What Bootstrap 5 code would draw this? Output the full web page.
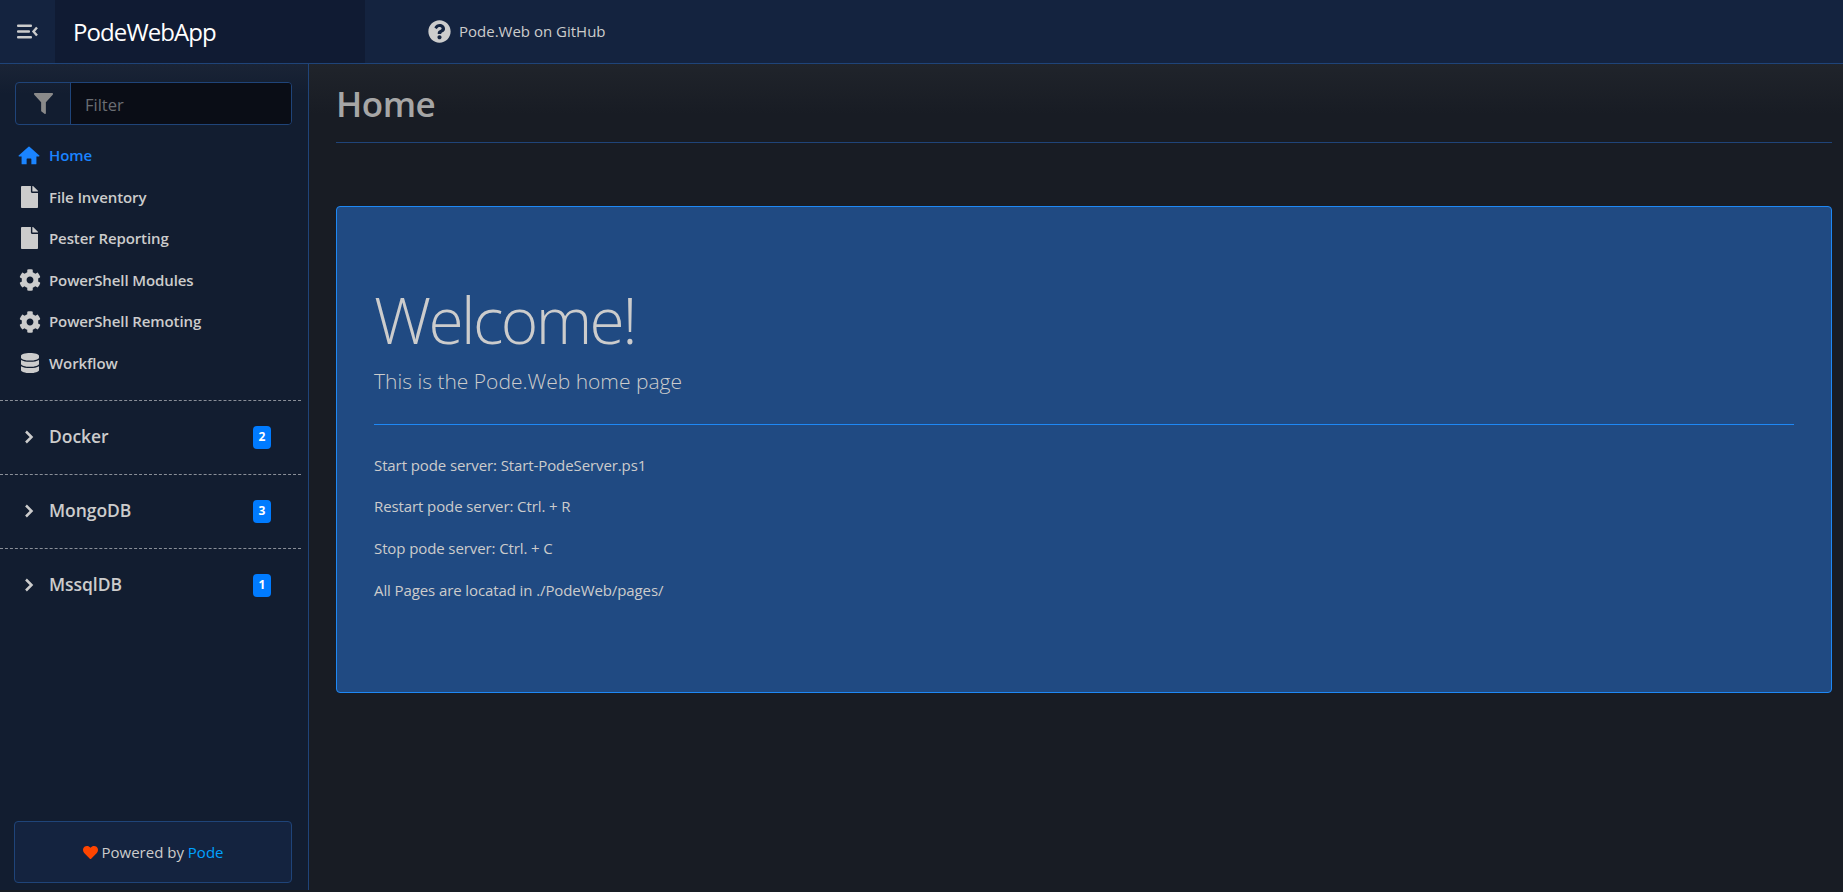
<!DOCTYPE html>
<html lang="en">
<head>
  <meta charset="UTF-8">
  <title>Home | PodeWebApp</title>
  <link href="https://cdn.jsdelivr.net/npm/bootstrap@5.3.0/dist/css/bootstrap.min.css" rel="stylesheet">
  <style>
    html, body {
      height: 100%;
      overflow: hidden;
    }

    body {
      background-color: #181c24;
      color: #cccccc;
      font-family: "Open Sans", "Liberation Sans", sans-serif;
      font-size: 15px;
    }

    .top-bar {
      height: 64px;
      background-color: #14233f;
      border-bottom: 1px solid #1f4479;
    }

    .toggle-btn {
      width: 55px;
    }

    .brand-box {
      width: 310px;
      padding-left: 18px;
      background-color: #101b33;
      color: #fff;
      font-size: 24px;
      letter-spacing: -0.9px;
    }

    .top-link {
      margin-left: 63px;
      color: #cccccc;
      font-size: 15px;
      letter-spacing: 0;
      text-decoration: none;
    }

    .side-bar {
      width: 309px;
      flex-shrink: 0;
      background: linear-gradient(180deg, #1a2436 0, #121d30 30px);
      border-right: 1px solid #1f4479;
      padding-top: 18px;
      margin-bottom: 2px;
    }

    .filter-group {
      margin: 0 16px 0 15px;
      height: 43px;
      border: 1px solid #1f4479;
      border-radius: 4px;
      overflow: hidden;
    }

    .filter-icon {
      width: 55px;
      flex-shrink: 0;
      border-right: 1px solid #1f4479;
    }

    .filter-input {
      min-width: 0;
      background-color: #0a0d16;
      color: #ccc;
      border: 0;
      outline: 0;
      padding: 3px 0 0 14px;
      font-size: 16.5px;
    }

    .filter-input::placeholder {
      color: #6a6d73;
    }

    .side-links {
      padding-top: 9.4px;
    }

    .side-link {
      height: 41.6px;
      padding-left: 18px;
      color: #cccccc;
      font-size: 15px;
      font-weight: 600;
      letter-spacing: -0.1px;
      text-decoration: none;
    }

    .side-link.current {
      color: #1a84ff;
    }

    .link-icon {
      width: 23px;
      margin-right: 8px;
    }

    .side-group {
      height: 74px;
      margin-right: 7px;
      padding-left: 24px;
      padding-right: 30px;
      border-top: 1px dashed #8a8f98;
      color: #cccccc;
      font-size: 17.5px;
      font-weight: 600;
      letter-spacing: -0.05px;
      text-decoration: none;
    }

    .side-group svg {
      margin-right: 15px;
    }

    .group-name {
      padding-bottom: 2px;
    }

    .side-badge {
      background-color: #007bff;
      color: #fff;
      font-size: 12px;
      font-weight: 700;
      width: 18px;
      height: 23px;
      border-radius: 4px;
      letter-spacing: 0;
    }

    .group-first {
      margin-top: 15.6px;
    }

    .power-box {
      margin: 0 16px 7px 14px;
      height: 62px;
      background-color: #14233f;
      border: 1px solid #1f4479;
      border-radius: 4px;
      font-size: 15px;
      letter-spacing: 0;
    }

    .power-box a {
      color: #00a2ff;
      text-decoration: none;
    }

    .main-area {
      padding: 0 11px 0 27px;
      background: linear-gradient(180deg, #20242b 0, #181c24 50px);
    }

    .page-head {
      height: 79px;
      padding-top: 2px;
      border-bottom: 1px solid #1f4479;
      color: #a6a6a6;
      font-size: 35px;
      font-weight: 600;
      letter-spacing: -0.5px;
    }

    .welcome-box {
      margin-top: 63px;
      height: 487px;
      padding: 75px 37px 0;
      background-color: #204a82;
      border: 1px solid #1e88f5;
      border-radius: 4px;
    }

    .welcome-title {
      font-size: 64px;
      font-weight: 300;
      line-height: 1.2;
      letter-spacing: -2.6px;
      margin-bottom: 7px;
    }

    .welcome-sub {
      font-size: 21px;
      font-weight: 300;
      margin-bottom: 0;
      line-height: 30px;
    }

    .welcome-line {
      margin: 28px 0 28px;
      border: 0;
      border-top: 1px solid #1e88f5;
      opacity: 1;
    }

    .welcome-text {
      font-size: 15px;
      letter-spacing: -0.1px;
      line-height: 24px;
      margin-bottom: 17.6px;
    }
  </style>
</head>
<body class="d-flex flex-column">

  <!-- Top bar -->
  <nav class="top-bar d-flex align-items-stretch flex-shrink-0">
    <a class="toggle-btn d-flex align-items-center justify-content-center" href="#">
      <svg width="21" height="15" viewBox="0 0 21 15" fill="#cccccc"><rect y="0.5" width="15" height="2.6" rx="1"/><rect y="6.2" width="13" height="2.6" rx="1"/><rect y="11.9" width="15" height="2.6" rx="1"/><path d="M20 3.5 L16.5 7.5 L20 11.5" fill="none" stroke="#cccccc" stroke-width="2.4"/></svg>
    </a>
    <div class="brand-box d-flex align-items-center">PodeWebApp</div>
    <a class="top-link d-flex align-items-center gap-2" href="#">
      <svg width="23" height="23" viewBox="0 0 512 512" fill="#cccccc"><path d="M504 256c0 136.997-111.043 248-248 248S8 392.997 8 256C8 119.083 119.043 8 256 8s248 111.083 248 248zM262.655 90c-54.497 0-89.255 22.957-116.549 63.758-3.536 5.286-2.353 12.415 2.715 16.258l34.699 26.31c5.205 3.947 12.621 3.008 16.665-2.122 17.864-22.658 30.113-35.797 57.303-35.797 20.429 0 45.698 13.148 45.698 32.958 0 14.976-12.363 22.667-32.534 33.976C247.128 238.528 216 254.941 216 296v4c0 6.627 5.373 12 12 12h56c6.627 0 12-5.373 12-12v-1.333c0-28.462 83.186-29.647 83.186-106.667 0-58.002-60.165-102-116.531-102zM256 338c-25.365 0-46 20.635-46 46 0 25.364 20.635 46 46 46s46-20.636 46-46c0-25.365-20.635-46-46-46z"/></svg>
      Pode.Web on GitHub
    </a>
  </nav>

  <div class="d-flex flex-grow-1 overflow-hidden">
    <!-- Sidebar -->
    <aside class="side-bar d-flex flex-column">
      <div class="filter-group d-flex flex-shrink-0">
        <div class="filter-icon d-flex align-items-center justify-content-center">
          <svg width="19" height="21" viewBox="0 0 512 512" fill="#8a8a8a" preserveAspectRatio="none"><path d="M487.976 0H24.028C2.71 0-8.047 25.866 7.058 40.971L192 225.941V432c0 7.831 3.821 15.17 10.237 19.662l80 55.98C298.02 518.69 320 507.493 320 487.98V225.941l184.947-184.97C520.021 25.896 509.338 0 487.976 0z"/></svg>
        </div>
        <input class="filter-input flex-grow-1" type="text" placeholder="Filter">
      </div>

      <div class="side-links d-flex flex-column">
        <a class="side-link current d-flex align-items-center" href="#">
          <span class="link-icon"><svg class="d-block" width="22" height="19" viewBox="0 0 576 512" fill="#1a84ff"><path d="M274 18a20 20 0 0 1 28 0L566 256a14 14 0 0 1-9 25H488V478a16 16 0 0 1-16 16H352V352a16 16 0 0 0-16-16H240a16 16 0 0 0-16 16V494H104a16 16 0 0 1-16-16V281H19a14 14 0 0 1-9-25Z"/></svg></span>
          Home
        </a>
        <a class="side-link d-flex align-items-center" href="#">
          <span class="link-icon"><svg class="d-block mx-auto" width="17" height="22" viewBox="0 0 384 512" fill="#cccccc" preserveAspectRatio="none"><path d="M224 136V0H24C10.7 0 0 10.7 0 24v464c0 13.3 10.7 24 24 24h336c13.3 0 24-10.7 24-24V160H248c-13.2 0-24-10.8-24-24zm160-14.1v6.1H256V0h6.1c6.4 0 12.5 2.5 17 7l97.9 98c4.5 4.5 7 10.6 7 16.9z"/></svg></span>
          File Inventory
        </a>
        <a class="side-link d-flex align-items-center" href="#">
          <span class="link-icon"><svg class="d-block mx-auto" width="17" height="22" viewBox="0 0 384 512" fill="#cccccc" preserveAspectRatio="none"><path d="M224 136V0H24C10.7 0 0 10.7 0 24v464c0 13.3 10.7 24 24 24h336c13.3 0 24-10.7 24-24V160H248c-13.2 0-24-10.8-24-24zm160-14.1v6.1H256V0h6.1c6.4 0 12.5 2.5 17 7l97.9 98c4.5 4.5 7 10.6 7 16.9z"/></svg></span>
          Pester Reporting
        </a>
        <a class="side-link d-flex align-items-center" href="#">
          <span class="link-icon"><svg class="d-block mx-auto" width="22" height="22" viewBox="0 0 512 512" fill="#cccccc"><path d="M487.4 315.7l-42.6-24.6c4.3-23.2 4.3-47 0-70.2l42.6-24.6c4.9-2.8 7.1-8.6 5.5-14-11.1-35.6-30-67.8-54.7-94.6-3.8-4.1-10-5.1-14.8-2.3L380.8 110c-17.9-15.4-38.5-27.3-60.8-35.1V25.8c0-5.6-3.9-10.5-9.4-11.7-36.7-8.2-74.3-7.8-109.2 0-5.5 1.2-9.4 6.1-9.4 11.7V75c-22.2 7.9-42.8 19.8-60.8 35.1L88.7 85.5c-4.9-2.8-11-1.9-14.8 2.3-24.7 26.7-43.6 58.9-54.7 94.6-1.7 5.4.6 11.2 5.5 14L67.3 221c-4.3 23.2-4.3 47 0 70.2l-42.6 24.6c-4.9 2.8-7.1 8.6-5.5 14 11.1 35.6 30 67.8 54.7 94.6 3.8 4.1 10 5.1 14.8 2.3l42.6-24.6c17.9 15.4 38.5 27.3 60.8 35.1v49.2c0 5.6 3.9 10.5 9.4 11.7 36.7 8.2 74.3 7.8 109.2 0 5.5-1.2 9.4-6.1 9.4-11.7v-49.2c22.2-7.9 42.8-19.8 60.8-35.1l42.6 24.6c4.9 2.8 11 1.9 14.8-2.3 24.7-26.7 43.6-58.9 54.7-94.6 1.5-5.5-.7-11.3-5.6-14.1zM256 336c-44.1 0-80-35.9-80-80s35.9-80 80-80 80 35.9 80 80-35.9 80-80 80z"/></svg></span>
          PowerShell Modules
        </a>
        <a class="side-link d-flex align-items-center" href="#">
          <span class="link-icon"><svg class="d-block mx-auto" width="22" height="22" viewBox="0 0 512 512" fill="#cccccc"><path d="M487.4 315.7l-42.6-24.6c4.3-23.2 4.3-47 0-70.2l42.6-24.6c4.9-2.8 7.1-8.6 5.5-14-11.1-35.6-30-67.8-54.7-94.6-3.8-4.1-10-5.1-14.8-2.3L380.8 110c-17.9-15.4-38.5-27.3-60.8-35.1V25.8c0-5.6-3.9-10.5-9.4-11.7-36.7-8.2-74.3-7.8-109.2 0-5.5 1.2-9.4 6.1-9.4 11.7V75c-22.2 7.9-42.8 19.8-60.8 35.1L88.7 85.5c-4.9-2.8-11-1.9-14.8 2.3-24.7 26.7-43.6 58.9-54.7 94.6-1.7 5.4.6 11.2 5.5 14L67.3 221c-4.3 23.2-4.3 47 0 70.2l-42.6 24.6c-4.9 2.8-7.1 8.6-5.5 14 11.1 35.6 30 67.8 54.7 94.6 3.8 4.1 10 5.1 14.8 2.3l42.6-24.6c17.9 15.4 38.5 27.3 60.8 35.1v49.2c0 5.6 3.9 10.5 9.4 11.7 36.7 8.2 74.3 7.8 109.2 0 5.5-1.2 9.4-6.1 9.4-11.7v-49.2c22.2-7.9 42.8-19.8 60.8-35.1l42.6 24.6c4.9 2.8 11 1.9 14.8-2.3 24.7-26.7 43.6-58.9 54.7-94.6 1.5-5.5-.7-11.3-5.6-14.1zM256 336c-44.1 0-80-35.9-80-80s35.9-80 80-80 80 35.9 80 80-35.9 80-80 80z"/></svg></span>
          PowerShell Remoting
        </a>
        <a class="side-link d-flex align-items-center" href="#">
          <span class="link-icon"><svg class="d-block mx-auto" width="18" height="20" viewBox="0 0 448 512" fill="#cccccc" preserveAspectRatio="none"><path d="M448 73.143v45.714C448 159.143 347.667 192 224 192S0 159.143 0 118.857V73.143C0 32.857 100.333 0 224 0s224 32.857 224 73.143zM448 176v102.857C448 319.143 347.667 352 224 352S0 319.143 0 278.857V176c48.125 33.143 136.208 48.572 224 48.572S399.874 209.143 448 176zm0 160v102.857C448 479.143 347.667 512 224 512S0 479.143 0 438.857V336c48.125 33.143 136.208 48.572 224 48.572S399.874 369.143 448 336z"/></svg></span>
          Workflow
        </a>
      </div>

      <a class="side-group group-first d-flex align-items-center" href="#">
        <svg width="10" height="14" viewBox="0 0 10 14" fill="none" stroke="#cccccc" stroke-width="2.5"><path d="M2 1.5 L7.5 7 L2 12.5"/></svg>
        <span class="group-name flex-grow-1">Docker</span>
        <span class="side-badge d-flex align-items-center justify-content-center">2</span>
      </a>
      <a class="side-group d-flex align-items-center" href="#">
        <svg width="10" height="14" viewBox="0 0 10 14" fill="none" stroke="#cccccc" stroke-width="2.5"><path d="M2 1.5 L7.5 7 L2 12.5"/></svg>
        <span class="group-name flex-grow-1">MongoDB</span>
        <span class="side-badge d-flex align-items-center justify-content-center">3</span>
      </a>
      <a class="side-group d-flex align-items-center" href="#">
        <svg width="10" height="14" viewBox="0 0 10 14" fill="none" stroke="#cccccc" stroke-width="2.5"><path d="M2 1.5 L7.5 7 L2 12.5"/></svg>
        <span class="group-name flex-grow-1">MssqlDB</span>
        <span class="side-badge d-flex align-items-center justify-content-center">1</span>
      </a>

      <div class="power-box mt-auto d-flex align-items-center justify-content-center gap-1 flex-shrink-0">
        <svg width="15" height="15" viewBox="0 0 512 512" fill="#ff4500"><path d="M462.3 62.6C407.5 15.9 326 24.3 275.7 76.2L256 96.5l-19.7-20.3C186.1 24.3 104.5 15.9 49.7 62.6c-62.8 53.6-66.1 149.8-9.9 207.9l193.5 199.8c12.5 12.9 32.8 12.9 45.3 0l193.5-199.8c56.3-58.1 53-154.3-9.8-207.9z"/></svg>
        <span>Powered by <a href="#">Pode</a></span>
      </div>
    </aside>

    <!-- Main content -->
    <main class="main-area flex-grow-1">
      <div class="page-head d-flex align-items-center">Home</div>
      <div class="welcome-box">
        <h1 class="welcome-title">Welcome!</h1>
        <p class="welcome-sub">This is the Pode.Web home page</p>
        <hr class="welcome-line">
        <p class="welcome-text">Start pode server: Start-PodeServer.ps1</p>
        <p class="welcome-text">Restart pode server: Ctrl. + R</p>
        <p class="welcome-text">Stop pode server: Ctrl. + C</p>
        <p class="welcome-text">All Pages are locatad in ./PodeWeb/pages/</p>
      </div>
    </main>
  </div>

  <script src="https://cdn.jsdelivr.net/npm/bootstrap@5.3.0/dist/js/bootstrap.bundle.min.js"></script>
</body>
</html>
